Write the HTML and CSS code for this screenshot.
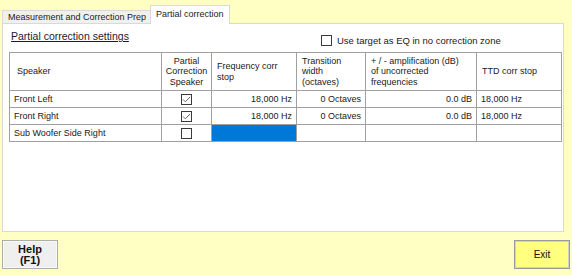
FILE: index.html
```html
<!DOCTYPE html>
<html lang="en">
<head>
  <meta charset="UTF-8">
  <title>Partial correction</title>
  <link rel="stylesheet" href="styles.css">
</head>
<body>

  <div class="tabs">
    <div class="tab">Measurement and Correction Prep</div>
    <div class="tab active">Partial correction</div>
  </div>

  <div class="panel">
    <div class="panel-head">
      <span class="group-title">Partial correction settings</span>
      <label class="check-opt"><span class="box"></span>Use target as EQ in no correction zone</label>
    </div>

    <div class="grid">
      <div class="cell head">Speaker</div>
      <div class="cell head center">Partial<br>Correction<br>Speaker</div>
      <div class="cell head">Frequency corr<br>stop</div>
      <div class="cell head">Transition<br>width<br>(octaves)</div>
      <div class="cell head">+ / - amplification (dB)<br>of uncorrected<br>frequencies</div>
      <div class="cell head">TTD corr stop</div>

      <div class="cell">Front Left</div>
      <div class="cell center"><span class="box"><svg width="11" height="11" viewBox="0 0 11 11"><path d="M2 5.5 L4.3 7.8 L9 3" fill="none" stroke="#666" stroke-width="1"/></svg></span></div>
      <div class="cell right">18,000 Hz</div>
      <div class="cell right">0 Octaves</div>
      <div class="cell right">0.0 dB</div>
      <div class="cell">18,000 Hz</div>

      <div class="cell">Front Right</div>
      <div class="cell center"><span class="box"><svg width="11" height="11" viewBox="0 0 11 11"><path d="M2 5.5 L4.3 7.8 L9 3" fill="none" stroke="#666" stroke-width="1"/></svg></span></div>
      <div class="cell right">18,000 Hz</div>
      <div class="cell right">0 Octaves</div>
      <div class="cell right">0.0 dB</div>
      <div class="cell">18,000 Hz</div>

      <div class="cell">Sub Woofer Side Right</div>
      <div class="cell center"><span class="box"></span></div>
      <div class="cell selected"></div>
      <div class="cell"></div>
      <div class="cell"></div>
      <div class="cell"></div>
    </div>
  </div>

  <div class="footer">
    <button class="btn help">Help<br>(F1)</button>
    <button class="btn exit">Exit</button>
  </div>

</body>
</html>
```

FILE: styles.css
```css
body {
  margin: 0;
  height: 275px;
  background: #ffffc4;
  font-family: 'Liberation Sans', Arial, sans-serif;
  font-size: 9px;
  color: #1a1a1a;
}
.tabs {
  display: flex;
  align-items: flex-end;
  padding: 5px 0 0 2px;
  margin-bottom: -1px;
  position: relative;
  z-index: 1;
}
.tab {
  box-sizing: border-box;
  width: 149px;
  height: 13px;
  margin-bottom: 1px;
  padding: 0 0 0 5px;
  line-height: 12px;
  background: #f0f0f0;
  border: 1px solid #d9d9d9;
  border-bottom: none;
  white-space: nowrap;
}
.tab.active {
  width: 80px;
  height: 19px;
  margin: 0 0 0 -1px;
  padding: 2px 0 0 5px;
  background: #fff;
}
.panel {
  box-sizing: border-box;
  width: 562px;
  height: 209px;
  margin-left: 2px;
  background: #fff;
  border: 1px solid #d9d9d9;
}
.panel-head {
  display: grid;
  grid-template-columns: 310px 1fr;
  align-items: start;
  height: 16px;
  margin-top: 4px;
  padding-left: 8px;
}
.group-title {
  font-size: 10.5px;
  line-height: 16px;
  text-decoration: underline;
  color: #1e1a2e;
  white-space: nowrap;
}
.check-opt {
  display: flex;
  align-items: center;
  gap: 5px;
  margin-top: 7px;
  font-size: 9.5px;
  line-height: 11px;
  white-space: nowrap;
}
.box {
  display: inline-block;
  box-sizing: border-box;
  width: 11px;
  height: 11px;
  border: 1px solid #3a3a3a;
  background: #fff;
}
.box svg {
  display: block;
  margin: -1px;
}
.grid {
  display: grid;
  grid-template-columns: 152px 50px 85px 69px 111px 85px;
  grid-template-rows: 38px 17px 17px 17px;
  width: max-content;
  margin: 8px 0 0 6px;
  border-left: 1px solid #a0a0a0;
  border-top: 1px solid #a0a0a0;
}
.cell {
  box-sizing: border-box;
  display: flex;
  align-items: center;
  padding: 0 4px;
  border-right: 1px solid #a0a0a0;
  border-bottom: 1px solid #a0a0a0;
  white-space: nowrap;
}
.cell.head {
  line-height: 10.5px;
  padding: 0 5px;
}
.cell.head:first-child {
  padding-left: 7px;
}
.cell.center {
  justify-content: center;
  text-align: center;
}
.cell.right {
  justify-content: flex-end;
}
.cell.selected {
  background: #0078d7;
}
.footer {
  display: flex;
  justify-content: space-between;
  padding: 8px 2px 0 2px;
}
.btn {
  box-sizing: border-box;
  width: 56px;
  height: 29px;
  padding: 0;
  font-family: 'Liberation Sans', Arial, sans-serif;
  font-size: 10px;
  line-height: 11px;
  color: #111;
  border: 1px solid #adadad;
}
.help {
  background: #efefef;
  font-size: 11px;
  font-weight: bold;
  box-shadow: inset 0 0 0 1px #f8f8f8;
}
.exit {
  background: #ffff80;
  border-color: #9a9a9a;
  box-shadow: inset 0 0 0 1px #d0d0d0;
}
```
